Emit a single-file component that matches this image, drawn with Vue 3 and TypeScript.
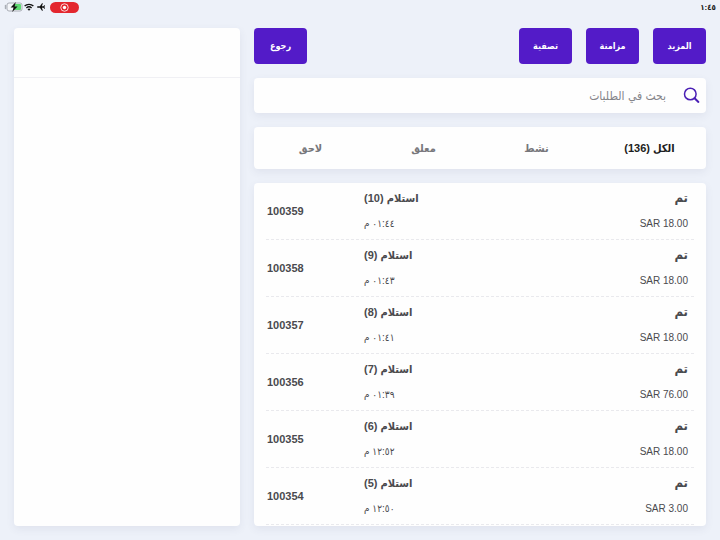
<script setup lang="ts">
import { ref } from 'vue'

interface Order {
  id: string
  status: string
  kind: string
  price: string
  time: string
}

const actions: string[] = ['المزيد', 'مزامنة', 'تصفية']
const tabs: string[] = ['الكل (136)', 'نشط', 'معلق', 'لاحق']
const activeTab = ref(0)
const query = ref('')

const orders: Order[] = [
  { id: '100359', status: 'تم', kind: 'استلام (10)', price: 'SAR 18.00', time: '٠١:٤٤ م' },
  { id: '100358', status: 'تم', kind: 'استلام (9)', price: 'SAR 18.00', time: '٠١:٤٣ م' },
  { id: '100357', status: 'تم', kind: 'استلام (8)', price: 'SAR 18.00', time: '٠١:٤١ م' },
  { id: '100356', status: 'تم', kind: 'استلام (7)', price: 'SAR 76.00', time: '٠١:٣٩ م' },
  { id: '100355', status: 'تم', kind: 'استلام (6)', price: 'SAR 18.00', time: '١٢:٥٢ م' },
  { id: '100354', status: 'تم', kind: 'استلام (5)', price: 'SAR 3.00', time: '١٢:٥٠ م' },
]
</script>

<template>
  <div class="page" dir="rtl" lang="ar">
    <header class="status-bar">
      <span class="clock">١:٤٥</span>
      <div class="indicators" dir="ltr">
        <svg class="battery" width="19" height="10" viewBox="0 0 19 10" aria-hidden="true">
          <path d="M1.5 3.5v3" stroke="#a9adb5" stroke-width="1.4" stroke-linecap="round" />
          <rect x="3" y="1" width="15" height="8" rx="2" fill="#f4f6fa" stroke="#a9adb5" />
          <path d="M10 2h6a1 1 0 0 1 1 1v4a1 1 0 0 1-1 1h-6z" fill="#5fda73" />
          <path d="M11.8 0 6.6 5.4h3L8.2 10l5.4-5.6h-3z" fill="#111" />
        </svg>
        <svg class="wifi" width="10" height="8" viewBox="0 0 20 16" aria-hidden="true">
          <g fill="none" stroke="#111" stroke-width="2.7">
            <path d="M1.2 6.2a12.6 12.6 0 0 1 17.6 0" />
            <path d="M4.8 10a7.5 7.5 0 0 1 10.4 0" />
          </g>
          <path d="M10 15.5 7 12.3a4.4 4.4 0 0 1 6 0z" fill="#111" />
        </svg>
        <svg class="plane" width="8" height="8" viewBox="0 0 16 16" aria-hidden="true">
          <path d="M0 8c0-.8 1-1.4 2.400-1.400h3.400L10 .6h1.800L9.800 6.600h3l1.800-2H16L15 8l1 3.400h-1.400l-1.800-2h-3l2 6H10l-4.200-6H2.400C1 9.400 0 8.800 0 8z" fill="#111" />
        </svg>
        <span class="recording">
          <svg width="9" height="9" viewBox="0 0 18 18" aria-hidden="true">
            <circle cx="9" cy="9" r="7.5" fill="none" stroke="#fff" stroke-width="1.6" />
            <circle cx="9" cy="9" r="3.4" fill="#fff" />
          </svg>
        </span>
      </div>
    </header>

    <div class="layout">
      <main class="orders">
        <nav class="toolbar">
          <button v-for="action in actions" :key="action" type="button" class="action">{{ action }}</button>
          <button type="button" class="action back">رجوع</button>
        </nav>

        <label class="card search">
          <svg width="17" height="17" viewBox="0 0 17 17" fill="none" stroke="#4a1fb5" aria-hidden="true">
            <circle cx="7.3" cy="7" r="5.8" stroke-width="1.5" />
            <path d="m11.6 11.3 3.8 3.6" stroke-width="2" stroke-linecap="round" />
          </svg>
          <input v-model="query" type="search" placeholder="بحث في الطلبات" aria-label="بحث في الطلبات" />
        </label>

        <div class="card tabs">
          <button
            v-for="(tab, index) in tabs"
            :key="tab"
            type="button"
            class="tab"
            :class="{ active: index === activeTab }"
            @click="activeTab = index"
          >{{ tab }}</button>
        </div>

        <ul class="card list">
          <li v-for="order in orders" :key="order.id" class="row">
            <div class="cell amount">
              <strong class="state">{{ order.status }}</strong>
              <span dir="ltr" class="price">{{ order.price }}</span>
            </div>
            <div class="cell pickup">
              <strong class="kind">{{ order.kind }}</strong>
              <span class="time">{{ order.time }}</span>
            </div>
            <strong class="number">{{ order.id }}</strong>
          </li>
        </ul>
      </main>

      <aside class="card detail">
        <div class="detail-head"></div>
      </aside>
    </div>
  </div>
</template>

<style>
body {
  margin: 0;
}
</style>

<style scoped>
.page {
  box-sizing: border-box;
  display: flex;
  flex-direction: column;
  min-height: 100vh;
  padding-bottom: 14px;
  background: #edf1f9;
  color: #4a4a4e;
  font-family: "Liberation Sans", "DejaVu Sans Condensed", "DejaVu Sans", sans-serif;
}

button,
input {
  margin: 0;
  border: 0;
  font-family: inherit;
}

.status-bar {
  display: flex;
  justify-content: space-between;
  align-items: center;
  height: 14px;
  padding: 0 4px;
}

.clock {
  color: #222;
  font-size: 8px;
  font-weight: 700;
}

.indicators {
  display: flex;
  align-items: center;
}

.wifi {
  margin-left: 1px;
}

.plane {
  margin: 0 5px 0 3px;
}

.recording {
  display: flex;
  align-items: center;
  justify-content: center;
  width: 29px;
  height: 11px;
  border-radius: 6px;
  background: #e3262e;
}

.layout {
  flex: 1;
  display: grid;
  grid-template-columns: 2fr 1fr;
  gap: 14px;
  padding: 14px 14px 0;
}

.card {
  border-radius: 4px;
  background: #fefefe;
  box-shadow: 0 3px 8px rgba(60, 70, 100, 0.08);
}

.orders {
  display: flex;
  flex-direction: column;
  gap: 14px;
  min-width: 0;
}

.toolbar {
  display: flex;
  gap: 14px;
}

.action {
  width: 53px;
  height: 36px;
  padding: 0;
  border-radius: 4px;
  background: #531bc8;
  color: #fff;
  font-size: 9px;
  font-weight: 700;
}

.back {
  margin-inline-start: auto;
}

.search {
  display: flex;
  align-items: center;
  gap: 17px;
  height: 35px;
  padding: 0 6px;
}

.search input {
  flex: 1;
  min-width: 0;
  padding: 0;
  outline: 0;
  appearance: none;
  background: transparent;
  color: #4a4a4e;
  font-size: 12px;
}

.search input::placeholder {
  color: #85858a;
  opacity: 1;
}

.tabs {
  display: grid;
  grid-template-columns: repeat(4, 1fr);
  height: 42px;
}

.tab {
  padding: 0;
  background: transparent;
  color: #77777b;
  font-size: 11px;
  font-weight: 700;
}

.tab.active {
  color: #1c1c20;
}

.list {
  flex: 1;
  margin: 0;
  padding: 0 12px;
  list-style: none;
}

.row {
  box-sizing: border-box;
  display: grid;
  grid-template-columns: 1fr 1fr 97px;
  align-items: center;
  height: 57px;
  padding: 0 6px 0 1px;
  border-bottom: 1px dashed #e9e9ed;
}

.cell {
  display: flex;
  flex-direction: column;
  gap: 10px;
}

.amount {
  align-items: flex-start;
}

.pickup {
  align-items: flex-end;
}

.state,
.kind,
.price,
.time {
  line-height: 16px;
}

.state {
  font-size: 13px;
}

.kind,
.number {
  font-size: 11px;
}

.price,
.time {
  font-size: 10px;
}

.number {
  text-align: left;
}

.detail-head {
  height: 49px;
  border-bottom: 1px solid #f0f0f4;
}
</style>
